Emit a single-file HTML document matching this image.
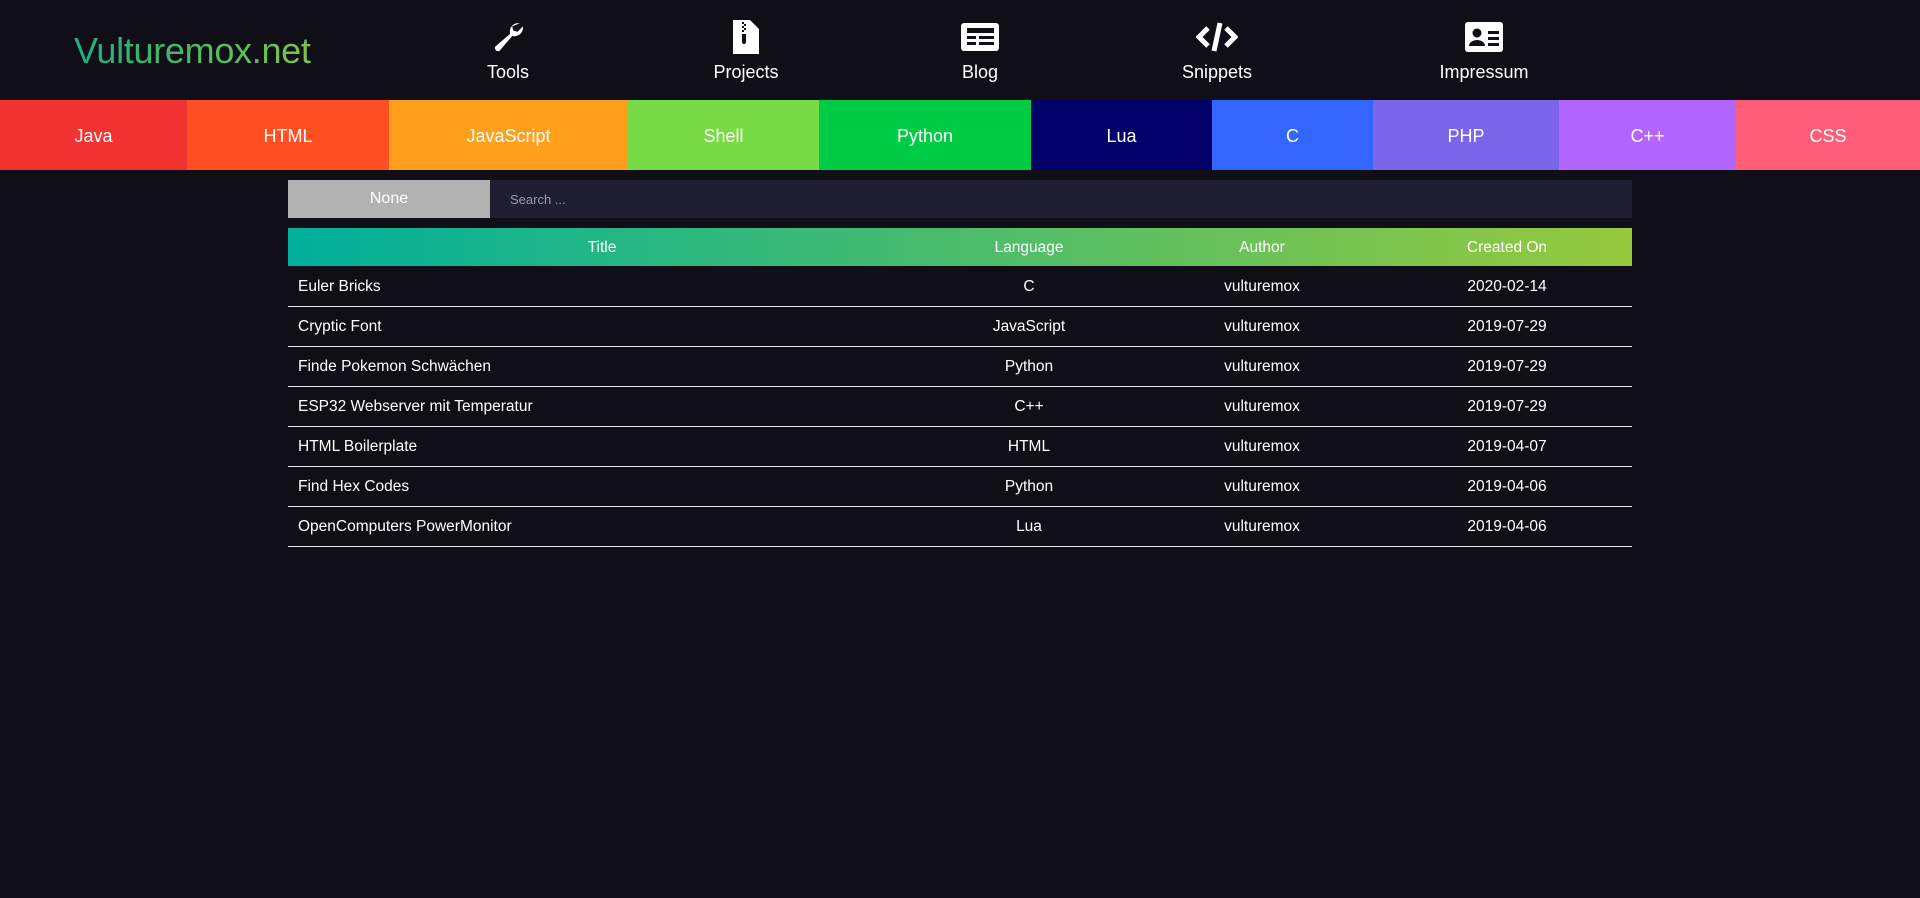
<!DOCTYPE html>
<html><head><meta charset="utf-8"><style>
*{margin:0;padding:0;box-sizing:border-box}
body{width:1920px;height:898px;background:#100f17;color:#fff;font-family:"Liberation Sans",sans-serif;overflow:hidden;position:relative}
.logo{position:absolute;left:74px;top:30px;font-size:36px;font-weight:300;background:linear-gradient(90deg,#1fae7e,#7ac54a);-webkit-background-clip:text;color:transparent;letter-spacing:-0.3px}
.nav{position:absolute;top:20px;width:200px;margin-left:-100px;text-align:center;font-size:18px}
.nav svg{display:block;margin:0 auto 8px;height:34px}
.bar{position:absolute;top:100px;height:70px;left:0;width:1920px;display:flex}
.bar div{height:70px;line-height:72px;text-align:center;font-size:18px}
.sel{position:absolute;left:288px;top:180px;width:202px;height:38px;background:#b2b2b2;text-align:center;line-height:38px;font-size:16px}
.search{position:absolute;left:490px;top:180px;width:1142px;height:38px;background:#201f31;color:#9a99a8;font-size:13px;line-height:40px;padding-left:20px}
table{position:absolute;left:288px;top:228px;width:1344px;border-collapse:collapse;font-size:15.5px}
th{height:38px;font-weight:normal;padding-top:2px}
thead tr{background:linear-gradient(90deg,#00b09b,#96c93d)}
td{height:40px;border-bottom:1.5px solid #e8e8e8;text-align:center;padding-top:2px}
td:first-child{text-align:left;padding-left:10px}
</style></head><body>
<div class="logo">Vulturemox.net</div>
<div class="nav" style="left:508px"><svg viewBox="0 0 32 32" width="34"><path fill="#fff" d="M27 3a8 8 0 0 0-9 10L4 25a3 3 0 0 0 4 4L20 15a8 8 0 0 0 10-9l-5 5-4-1-1-4z"/></svg>Tools</div>
<div class="nav" style="left:746px"><svg viewBox="0 0 26 34" width="26"><path fill="#fff" d="M0 0h17l9 9v25H0z"/><path fill="#100f17" d="M9 2h2v2H9zm2 2h2v2h-2zM9 6h2v2H9zm2 2h2v2h-2zM9 10h2v2H9zm0 4h4v8a2 2 0 0 1-4 0z"/></svg>Projects</div>
<div class="nav" style="left:980px"><svg viewBox="0 0 38 30" width="38"><rect x="0" y="1" width="38" height="28" rx="3" fill="#fff"/><path fill="#100f17" d="M6 6h27v5H6zM6 14h9v3H6zM18 14h15v3H18zM6 20h9v3H6zM18 20h15v3H18z"/></svg>Blog</div>
<div class="nav" style="left:1217px"><svg viewBox="0 0 42 32" width="42"><path fill="none" stroke="#fff" stroke-width="5" d="M12 7 3 16l9 9M30 7l9 9-9 9M24 2l-6 28"/></svg>Snippets</div>
<div class="nav" style="left:1484px"><svg viewBox="0 0 38 30" width="38"><rect x="0" y="0" width="38" height="30" rx="3" fill="#fff"/><circle cx="12" cy="11" r="4.5" fill="#100f17"/><path fill="#100f17" d="M4 24a8 6 0 0 1 16 0zM23 9h11v3H23zM23 15h11v3H23zM23 21h11v3H23z"/></svg>Impressum</div>
<div class="bar">
<div style="width:187px;background:#f33232">Java</div>
<div style="width:202px;background:#ff4f23">HTML</div>
<div style="width:239px;background:#ff9f1c">JavaScript</div>
<div style="width:191px;background:#76db44">Shell</div>
<div style="width:212px;background:#00cb44">Python</div>
<div style="width:181px;background:#000068">Lua</div>
<div style="width:161px;background:#3366ff">C</div>
<div style="width:186px;background:#7a65eb">PHP</div>
<div style="width:177px;background:#b366ff">C++</div>
<div style="width:184px;background:#ff5c77">CSS</div>
</div>
<div class="sel">None</div>
<div class="search">Search ...</div>
<table>
<thead><tr><th style="width:628px">Title</th><th style="width:226px">Language</th><th style="width:240px">Author</th><th>Created On</th></tr></thead>
<tbody>
<tr><td>Euler Bricks</td><td>C</td><td>vulturemox</td><td>2020-02-14</td></tr>
<tr><td>Cryptic Font</td><td>JavaScript</td><td>vulturemox</td><td>2019-07-29</td></tr>
<tr><td>Finde Pokemon Schwächen</td><td>Python</td><td>vulturemox</td><td>2019-07-29</td></tr>
<tr><td>ESP32 Webserver mit Temperatur</td><td>C++</td><td>vulturemox</td><td>2019-07-29</td></tr>
<tr><td>HTML Boilerplate</td><td>HTML</td><td>vulturemox</td><td>2019-04-07</td></tr>
<tr><td>Find Hex Codes</td><td>Python</td><td>vulturemox</td><td>2019-04-06</td></tr>
<tr><td>OpenComputers PowerMonitor</td><td>Lua</td><td>vulturemox</td><td>2019-04-06</td></tr>
</tbody></table>
</body></html>
